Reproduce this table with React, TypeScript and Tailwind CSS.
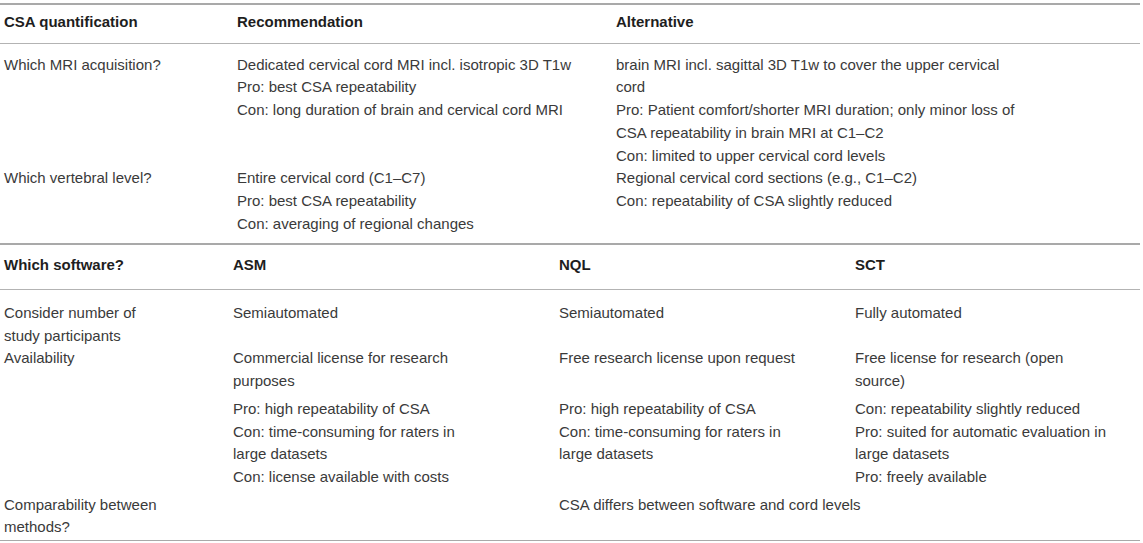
const font = "font-['Liberation_Sans','Helvetica_Neue',Arial,sans-serif]";

type Cell = string | string[];

const top = [
  {
    label: 'Which MRI acquisition?',
    rec: [
      'Dedicated cervical cord MRI incl. isotropic 3D T1w',
      'Pro: best CSA repeatability',
      'Con: long duration of brain and cervical cord MRI',
    ],
    alt: [
      'brain MRI incl. sagittal 3D T1w to cover the upper cervical cord',
      'Pro: Patient comfort/shorter MRI duration; only minor loss of CSA repeatability in brain MRI at C1–C2',
      'Con: limited to upper cervical cord levels',
    ],
  },
  {
    label: 'Which vertebral level?',
    rec: [
      'Entire cervical cord (C1–C7)',
      'Pro: best CSA repeatability',
      'Con: averaging of regional changes',
    ],
    alt: ['Regional cervical cord sections (e.g., C1–C2)', 'Con: repeatability of CSA slightly reduced'],
  },
];

const Lines = ({ items }: { items: Cell }) => (
  <div>
    {(Array.isArray(items) ? items : [items]).map((t, i) => (
      <p key={i}>{t}</p>
    ))}
  </div>
);

export default function App() {
  return (
    <div className={`${font} w-[1143px] h-[543px] overflow-hidden bg-white pt-[3px] text-[15px] leading-[22.7px] text-[#3a3a3a]`}>
      <div className="w-[1140px] border-t-2 border-[#a9a9a9]">
        {/* first block */}
        <div className="grid grid-cols-[233px_379px_408px] border-b border-[#b3b3b3] pl-[4px] pt-[6px] pb-[9px] font-bold text-[#1e1e1e]">
          <div>CSA quantification</div>
          <div>Recommendation</div>
          <div>Alternative</div>
        </div>
        <div className="pt-[10px] pb-[8px] pl-[4px]">
          {top.map((r) => (
            <div key={r.label} className="grid grid-cols-[233px_379px_408px]">
              <div>{r.label}</div>
              <Lines items={r.rec} />
              <Lines items={r.alt} />
            </div>
          ))}
        </div>

        {/* second block */}
        <div className="border-t-2 border-[#a9a9a9]">
          <div className="grid grid-cols-[229px_326px_296px_1fr] border-b border-[#b3b3b3] pl-[4px] pt-[9px] pb-[12px] font-bold text-[#1e1e1e]">
            <div>Which software?</div>
            <div>ASM</div>
            <div>NQL</div>
            <div>SCT</div>
          </div>
          <div className="pl-[4px] pt-[12px] pb-[1px]">
            <div className="grid grid-cols-[229px_326px_296px_1fr]">
              <div className="pr-[60px]">Consider number of study participants</div>
              <div>Semiautomated</div>
              <div>Semiautomated</div>
              <div>Fully automated</div>
            </div>
            <div className="grid grid-cols-[229px_326px_296px_1fr]">
              <div>Availability</div>
              <div className="pr-[90px]">Commercial license for research purposes</div>
              <div>Free research license upon request</div>
              <div className="pr-[50px]">Free license for research (open source)</div>
            </div>
            <div className="grid grid-cols-[229px_326px_296px_1fr] pt-[5px]">
              <div />
              <div className="pr-[90px]">
                <p>Pro: high repeatability of CSA</p>
                <p>Con: time-consuming for raters in large datasets</p>
                <p>Con: license available with costs</p>
              </div>
              <div className="pr-[60px]">
                <p>Pro: high repeatability of CSA</p>
                <p>Con: time-consuming for raters in large datasets</p>
              </div>
              <div className="pr-[20px]">
                <p>Con: repeatability slightly reduced</p>
                <p>Pro: suited for automatic evaluation in large datasets</p>
                <p>Pro: freely available</p>
              </div>
            </div>
            <div className="grid grid-cols-[555px_1fr] pt-[5px]">
              <div className="pr-[380px]">Comparability between methods?</div>
              <div>CSA differs between software and cord levels</div>
            </div>
          </div>
          <div className="border-b border-[#a9a9a9]" />
        </div>
      </div>
    </div>
  );
}
